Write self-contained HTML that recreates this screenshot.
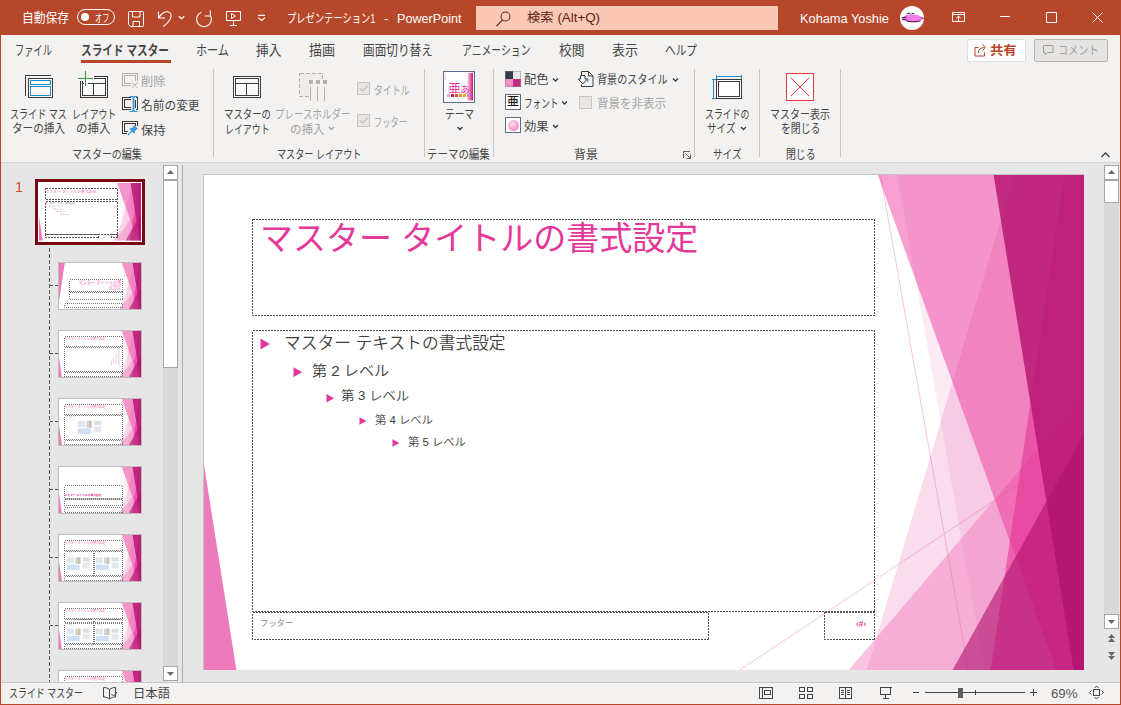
<!DOCTYPE html>
<html lang="ja"><head><meta charset="utf-8"><title>プレゼンテーション1 - PowerPoint</title>
<style>
*{box-sizing:border-box;margin:0;padding:0}
html,body{width:1121px;height:705px;overflow:hidden;background:#e6e6e6}
body{position:relative;font-family:"Liberation Sans","Noto Sans CJK JP",sans-serif;font-size:12px;color:#262626}
.abs,.t,svg{position:absolute}
svg{left:0;top:0;overflow:visible}
.t{white-space:pre;line-height:16px;height:16px;transform-origin:0 50%}
#titlebar{position:absolute;left:0;top:0;width:1121px;height:35px;background:#b7472a}
#tabs{position:absolute;left:0;top:35px;width:1121px;height:31px;background:#f3f2f1}
#ribbon{position:absolute;left:0;top:66px;width:1121px;height:97px;background:#f3f2f1;border-bottom:1px solid #d2d0ce}
#work{position:absolute;left:0;top:163px;width:1121px;height:519px;background:#e6e6e6}
#status{position:absolute;left:0;top:682px;width:1121px;height:23px;background:#f3f2f1;border-top:1px solid #c8c6c4}
#wborder{position:absolute;left:0;top:35px;width:1121px;height:670px;border:1px solid #b7472a;border-top:none;pointer-events:none}
.sep{position:absolute;top:69px;width:1px;height:88px;background:#c8c6c4}
</style></head><body>

<div id="titlebar"></div>
<div id="tabs"></div>
<div id="ribbon"></div>
<div class="abs" style="left:476px;top:6px;width:302px;height:24px;background:#fbc8b6"></div>
<div class="abs" style="left:77px;top:9px;width:38px;height:16px;border:1px solid #fff;border-radius:8px"></div>
<div class="abs" style="left:80.700px;top:12.600px;width:8.500px;height:8.500px;border-radius:4.250px;background:#fff"></div>
<div class="abs" style="left:80.5px;top:60px;width:90px;height:3px;background:#b7472a"></div>
<div class="abs" style="left:966.5px;top:38.500px;width:59px;height:23px;background:#fff;border:1px solid #e1dfdd;border-radius:2px"></div>
<div class="abs" style="left:1034px;top:38.500px;width:74px;height:23px;background:#e5e4e2;border:1px solid #b8b6b4;border-radius:2px"></div>
<div class="abs" style="left:899.5px;top:6px;width:24px;height:24px;border-radius:12px;background:#fff"></div>
<!-- titlebar icons -->
<svg width="1121" height="36" fill="none" stroke="#fff" stroke-width="1">
<path d="M128.500 12.500a1 1 0 0 1 1-1h13a1 1 0 0 1 1 1v13a1 1 0 0 1-1 1h-12l-2-2zM132.500 11.500v5.500h7.500v-5.500M133 26.500v-5h6.500v5"/>
<path d="M158.500 11.500v6.500h6.500M158.800 17.700C161 13.500 165 11.200 168 11.800C171.500 12.500 172 16.500 170 19.500C168.500 22 166 24.500 163.500 26.500" stroke-width="1.1"/>
<path d="M178.800 16.200l2.700 2.500l2.700-2.500" stroke-width="1.300"/>
<path d="M204.500 16h5.800v-5.800M210.700 16.100A7.400 7.400 0 1 1 201.400 12.300" stroke-width="1.100"/>
<path d="M226.500 11.500h14v9h-14zM233.500 20.500v4.500M230 25.500h7M231.500 13.500v5l4-2.500z"/>
<path d="M258.200 15.300h6.800M258.200 17.600l3.400 2.800l3.400-2.800" stroke-width="1.200"/>
<path d="M952.500 12.500h12v9h-12zM952.500 14.500h12M958.500 21.500v-5M956.300 18.200l2.200-2.200l2.200 2.200"/>
<path d="M1000 16.500h10M1046.500 12.500h10v10h-10zM1092.500 12.500l10 10M1102.500 12.500l-10 10"/>
<g stroke="#6b2a18" stroke-width="1.1"><circle cx="505.500" cy="16.500" r="4.500"/><path d="M502.500 20l-6 6"/></g>
</svg>
<!-- avatar scribble -->
<svg width="1121" height="36"><path d="M902.500 18.500c1-2.500 4-4 8-4.200c4-.2 8 .6 10.500 2.200l2.700 2.200l-2.700 1.800c-3 1.300-8 1.700-12 1.200c-3-.4-5.500-1.500-6.500-3.200z" fill="#f47de9"/><path d="M901.500 17.800l5 -.6M902 19.500l4.500 .3M906.500 21l5 .8l4.500 -.1l4.500-.8M906.500 14.200l2.500-1.200l1.500 .8M911.500 13.300l2.500 .2M921.500 17.500l2.200 1" stroke="#1a0a1a" stroke-width=".9" fill="none"/></svg>
<!-- share / comment icons -->
<svg width="1121" height="70" fill="none" stroke-width="1">
<path d="M978.500 47.500h-3.500v8.500h9.500v-3.500M978 53c.5-3.500 3-5.500 6.500-5.500M982.500 44.500l3 3l-3 3" stroke="#b7472a"/>
<path d="M1043.500 45.500h9.500v7h-5.500l-2.500 2.500v-2.500h-1.500z" stroke="#a19f9d"/>
</svg>
<!-- separators -->
<div class="sep" style="left:213px"></div><div class="sep" style="left:424px"></div><div class="sep" style="left:493px"></div>
<div class="sep" style="left:694px"></div><div class="sep" style="left:759px"></div><div class="sep" style="left:840px"></div>
<!-- ribbon icons -->
<svg width="1121" height="165" fill="none" stroke-width="1" shape-rendering="crispEdges">
<!-- insert slide master -->
<path d="M25.500 95.500v-20h25.500" stroke="#3b3a39"/>
<rect x="28.500" y="78.500" width="24" height="19" fill="#fafafa" stroke="#3b3a39"/>
<rect x="30.500" y="80.500" width="20" height="4" stroke="#1e8bcd"/>
<rect x="30.500" y="86.500" width="20" height="9" stroke="#1e8bcd"/>
<!-- insert layout -->
<rect x="82" y="78" width="24" height="18" fill="#fafafa" stroke="none"/>
<path d="M93.500 76.500H107.500V97.500H80.500V81M94 78.500H105.500V95.500H82.500V81M82.500 83.500H84M87.500 83.500H105.500M93.500 83.500V95.500" stroke="#3b3a39"/>
<path d="M85.500 71V86M78 78.500H93" stroke="#2f9a41" stroke-width="1.300"/>
<!-- delete (disabled) -->
<g stroke="#b3b0ad"><path d="M137.500 81V73.500H122.500V85.500H131M135.500 81V75.500H124.500V83.500H131"/><path d="M132 82.500l5.500 5.500M137.500 82.500l-5.500 5.500" shape-rendering="auto"/></g>
<!-- rename -->
<path d="M131 97.500H122.500V109.500H131M131 99.500H124.500V107.500H131M136 97.500H137.500V109.500H136M135.500 99.500V107.500" stroke="#3b3a39"/>
<path d="M133.500 97v14" stroke="#2b90d9" stroke-width="1.700" shape-rendering="auto"/><path d="M129.500 96.500h3l1 1l1-1h3M129.500 111.500h3l1-1l1 1h3" stroke="#2b90d9" stroke-width="1.200" shape-rendering="auto"/>
<!-- preserve -->
<path d="M137.500 126V121.500H122.500V133.500H127M135.500 126V123.500H124.500V131.500H128" stroke="#3b3a39"/>
<g shape-rendering="auto"><path d="M134 125.500l3.500 3.500l-1.200 .3l-1.800 1.800l-.2 2.200l-4.600-4.600l2.200-.2l1.800-1.800z" fill="#3a96dd" stroke="#1e8bcd" stroke-width=".6"/><path d="M131.800 131.200l-4 4" stroke="#1e8bcd" stroke-width="1.200"/></g>
<!-- master layout -->
<rect x="233.500" y="76.500" width="27" height="21" fill="#fafafa" stroke="#3b3a39"/>
<rect x="235.500" y="78.500" width="23" height="17" stroke="#3b3a39"/>
<path d="M235.500 83.500h23M246.500 83.500v12" stroke="#3b3a39"/>
<!-- insert placeholder (disabled) -->
<rect x="299.500" y="73.500" width="23" height="23" fill="#edecea" stroke="#b3b0ad" stroke-dasharray="4 2"/>
<rect x="308.500" y="78.500" width="20" height="24" fill="#f3f2f1" stroke="none"/>
<path d="M309 79.500h4v4h-4zM316 79.500h4v4h-4zM323 79.500h4v4h-4z" fill="#b3b0ad" stroke="none"/>
<path d="M310.500 87v14M317.500 87v14M324.500 87v14" stroke="#b3b0ad"/>
<!-- checkboxes -->
<rect x="357.500" y="82.500" width="12" height="12" fill="#e8e6e4" stroke="#c8c6c4"/>
<rect x="357.500" y="114.500" width="12" height="12" fill="#e8e6e4" stroke="#c8c6c4"/>
<path d="M360 88.500l2.500 2.500l5-5M360 120.500l2.500 2.500l5-5" stroke="#a19f9d" shape-rendering="auto"/>
<!-- theme -->
<rect x="443.500" y="71.500" width="31" height="31" fill="#fff" stroke="#5d6b8a"/>
<!-- colors -->
<rect x="505" y="71" width="8" height="8" fill="#2f3b47" stroke="none"/><rect x="513" y="71" width="8" height="8" fill="#e9e8e7" stroke="none"/>
<rect x="505" y="79" width="8" height="8" fill="#f28fc8" stroke="none"/><rect x="513" y="79" width="8" height="8" fill="#c32a81" stroke="none"/>
<rect x="505.500" y="71.500" width="15" height="15" stroke="#8a8886" stroke-opacity=".5"/>
<!-- fonts -->
<rect x="505.500" y="94.500" width="15" height="15" fill="#fff" stroke="#5d6b8a"/>
<!-- effects -->
<rect x="505.500" y="117.500" width="15" height="15" fill="#fff" stroke="#5d6b8a"/>
<!-- background styles -->
<g shape-rendering="auto"><path d="M581.500 75v-3.500h7l4.500 4.500v10.500h-11.500v-2M588.500 71.500v4.500h4.500" stroke="#3b3a39"/>
<path d="M580.500 75.500h4.500v3.500h2.300l-4.500 5l-4.500-5h2.200z" fill="#f3f2f1" stroke="#3b3a39"/><path d="M586 78.500l2.300 .5l-.5 3z" fill="#3a96dd" stroke="#3a96dd" stroke-width=".6"/></g>
<!-- hide bg checkbox -->
<rect x="579.500" y="96.500" width="12" height="12" fill="#e8e6e4" stroke="#c8c6c4"/>
<!-- dialog launcher -->
<path d="M683.500 157.500v-6h6" stroke="#605e5c"/><path d="M685.500 153.500l5 5M690.500 154.500v4h-4" stroke="#605e5c" shape-rendering="auto"/>
<!-- slide size -->
<rect x="716.500" y="79.500" width="25" height="19" fill="#fff" stroke="#3b3a39"/>
<rect x="718.500" y="81.500" width="21" height="15" stroke="#3b3a39"/>
<path d="M716.500 76.500h25M716.500 74.500v4M741.500 74.500v4M713.500 79.500v19M711.500 79.500h4M711.500 98.500h4" stroke="#1e8bcd"/>
<!-- close master -->
<rect x="786.500" y="73.500" width="27" height="27" fill="#fff" stroke="#e8373d"/>
<path d="M791 78l18 18M809 78l-18 18" stroke="#e8373d" shape-rendering="auto"/>
<!-- chevrons -->
<g stroke="#3b3b3b" stroke-width="1.300" shape-rendering="auto">
<path d="M553 78.500l2.500 2.500l2.500-2.500M562 101.500l2.500 2.500l2.500-2.500M553 125l2.500 2.500l2.500-2.500M673 78.500l2.500 2.500l2.500-2.500"/>
<path d="M457.500 127l2.500 2.500l2.500-2.500M741 127l2.500 2.500l2.500-2.500"/>
<path d="M329 127l2.500 2.500l2.500-2.500" stroke="#a19f9d"/>
<path d="M1101.500 157l4-4l4 4"/>
</g>
</svg>
<!-- theme icon content -->
<svg width="1121" height="165"><defs><linearGradient id="tg" x1="0" x2="1"><stop offset="0" stop-color="#fbd3e8"/><stop offset=".6" stop-color="#ec62ae"/><stop offset="1" stop-color="#c2187b"/></linearGradient></defs>
<path d="M468 73h5v27.500h-6z" fill="url(#tg)"/><path d="M445.300 73v7" stroke="#f7b8da" stroke-width=".8"/>
<path d="M447 94h3v3h-3z" fill="#f5a3d3"/><path d="M451 94h3v3h-3z" fill="#b5246e"/><path d="M455 94h3v3h-3z" fill="#d9531e"/><path d="M459 94h3v3h-3z" fill="#ee8a1f"/><path d="M463 94h3v3h-3z" fill="#f2a614"/><path d="M467 94h3v3h-3z" fill="#b98ae8"/></svg>
<div class="t" style="left:448.300px;top:80.500px;font-size:12.500px;color:#e5399a;letter-spacing:-.500px">亜<span style="font-size:9.500px">あ</span></div>
<div class="t" style="left:507px;top:94.300px;font-size:12px;color:#1b1a19;font-weight:500">亜</div>
<div class="abs" style="left:507.500px;top:119.500px;width:11px;height:11px;border-radius:6px;background:radial-gradient(circle at 40% 35%,#fde0ef,#f28fc8 70%,#ee7ebf)"></div>

<div class="abs" style="left:163px;top:165px;width:15px;height:516px;background:#d9d9d9"></div>
<div class="abs" style="left:163px;top:165px;width:15px;height:15px;background:#fff;border:1px solid #a6a6a6"></div>
<div class="abs" style="left:163px;top:180px;width:15px;height:188px;background:#fff;border:1px solid #a6a6a6"></div>
<div class="abs" style="left:163px;top:666px;width:15px;height:15px;background:#fff;border:1px solid #a6a6a6"></div>
<div class="abs" style="left:182px;top:165px;width:1px;height:517px;background:#adadad"></div>
<div class="abs" style="left:1104px;top:165px;width:15px;height:517px;background:#d9d9d9"></div>
<div class="abs" style="left:1104px;top:165px;width:15px;height:15px;background:#fff;border:1px solid #a6a6a6"></div>
<div class="abs" style="left:1104px;top:180px;width:15px;height:23px;background:#fff;border:1px solid #a6a6a6"></div>
<div class="abs" style="left:1104px;top:614px;width:15px;height:15px;background:#fff;border:1px solid #a6a6a6"></div>
<div class="abs" style="left:1104px;top:629px;width:15px;height:53px;background:#e6e6e6"></div>
<svg width="1121" height="705" fill="#686868"><path d="M167 174l3.500-4l3.500 4zM167 672l3.500 4l3.500-4zM1108 174l3.500-4l3.500 4zM1108 620l3.500 4l3.500-4z"/>
<path d="M1108 638l3.500-4l3.500 4zM1108 642l3.500-4l3.500 4zM1108 652l3.500 4l3.500-4zM1108 656l3.500 4l3.500-4z" fill="#666"/></svg>
<svg width="0" height="0"><defs>
<g id="fR"><line x1="676.4" y1="0" x2="764.4" y2="495" stroke="#f9c6e1" stroke-width="4"/>
<line x1="880" y1="265.7" x2="535.9" y2="495" stroke="#f9c6e1" stroke-width="4"/>
<polygon points="810.3,0 880,0 880,495 662.7,495" fill="#e32d91" fill-opacity=".16"/>
<polygon points="693.2,0 880,0 880,495 780.5,495" fill="#e32d91" fill-opacity=".10"/>
<polygon points="644.7,495 880,220 880,495" fill="#ef69b3" fill-opacity=".40"/>
<polygon points="673.8,0 880,0 880,495 852.2,495" fill="#e92c96" fill-opacity=".45"/>
<polygon points="860.3,0 880,0 880,495 786.7,495" fill="#e32d91" fill-opacity=".55"/>
<polygon points="789.6,0 880,0 880,495 869.6,495" fill="#b71773" fill-opacity=".85"/>
<polygon points="748.6,495 880,259.1 880,495" fill="#b0116e" fill-opacity=".60"/></g>
<polygon id="fL" points="0,289.7 0,495 32.4,495" fill="#e32d91" fill-opacity=".63"/>
<polygon id="fT" points="0,0 62,0 0,410" fill="#e32d91" fill-opacity=".63"/>
<g id="ico"><rect x="0" y="0" width="60" height="50" fill="#dfe6ee"/><rect x="70" y="0" width="50" height="55" fill="#c9d9ea"/><rect x="95" y="0" width="14" height="55" fill="#e9b27c"/><rect x="135" y="0" width="60" height="35" fill="#d5e4dc"/><rect x="0" y="62" width="110" height="45" fill="#cfe0f2"/><rect x="135" y="45" width="60" height="50" fill="#e4e8ee"/></g>
</defs></svg>
<div class="abs" style="left:35px;top:179px;width:110px;height:66px;border:3px solid #7a0a12;background:#fff"></div>
<svg style="left:39px;top:183px;overflow:hidden" width="102" height="58"><g transform="scale(0.11591)"><rect width="880" height="495" fill="#fff"/><use href="#fR"/><use href="#fL"/><text x="57" y="84" font-size="33" fill="#ee6db5" text-anchor="start" font-weight="400">マスター タイトルの書式設定</text><g fill="#9a9a9a"><text x="82" y="177" font-size="17" fill="#8a8a8a" text-anchor="start" font-weight="400">マスター テキストの書式設定</text><text x="110" y="204" font-size="15" fill="#8a8a8a" text-anchor="start" font-weight="400">第 2 レベル</text><text x="139" y="229" font-size="13" fill="#8a8a8a" text-anchor="start" font-weight="400">第 3 レベル</text><text x="172" y="252" font-size="11" fill="#8a8a8a" text-anchor="start" font-weight="400">第 4 レベル</text><text x="205" y="274" font-size="11" fill="#8a8a8a" text-anchor="start" font-weight="400">第 5 レベル</text></g><g fill="#ee6db5"><rect x="56" y="164" width="12" height="12"/><rect x="89" y="192" width="10" height="10"/><rect x="122" y="219" width="9" height="9"/><rect x="155" y="243" width="8" height="8"/><rect x="188" y="265" width="8" height="8"/></g></g><g fill="none" stroke="#5a5a5a" stroke-width="1" stroke-dasharray="2 1" shape-rendering="crispEdges"><rect x="6.5" y="5.5" width="72.0" height="11.0"/><rect x="6.5" y="18.5" width="72.0" height="33.0"/><rect x="6.5" y="51.5" width="53.0" height="3.0"/><rect x="72.5" y="51.5" width="6.0" height="3.0"/></g></svg>
<svg style="left:59px;top:263px;overflow:hidden;outline:1px solid #bdbdbd" width="82" height="46"><g transform="scale(0.09318)"><rect width="880" height="495" fill="#fff"/><use href="#fR"/><use href="#fT"/><text x="670" y="226" font-size="45" fill="#ee6db5" text-anchor="end" font-weight="400">マスター タイトルの書</text><text x="670" y="280" font-size="45" fill="#ee6db5" text-anchor="end" font-weight="400">式設定</text></g><g fill="none" stroke="#777" stroke-width="1" stroke-dasharray="1 1" shape-rendering="crispEdges"><rect x="10.5" y="16.5" width="53.0" height="12.0"/><rect x="10.5" y="29.5" width="53.0" height="7.0"/><rect x="5.5" y="40.5" width="58.0" height="4.0"/></g></svg>
<svg style="left:59px;top:331px;overflow:hidden;outline:1px solid #bdbdbd" width="82" height="46"><g transform="scale(0.09318)"><rect width="880" height="495" fill="#fff"/><use href="#fR"/><use href="#fL"/><text x="60" y="92" font-size="33" fill="#ee6db5" text-anchor="start" font-weight="400">マスター タイトルの書式設定</text><g fill="#c9a0c0"><rect x="640" y="180" width="6" height="190"/><rect x="610" y="240" width="5" height="120"/><rect x="585" y="280" width="5" height="80"/><rect x="560" y="320" width="5" height="50"/></g></g><g fill="none" stroke="#777" stroke-width="1" stroke-dasharray="1 1" shape-rendering="crispEdges"><rect x="5.5" y="5.5" width="58.0" height="10.0"/><rect x="5.5" y="16.5" width="58.0" height="24.0"/><rect x="5.5" y="41.5" width="58.0" height="4.0"/></g></svg>
<svg style="left:59px;top:399px;overflow:hidden;outline:1px solid #bdbdbd" width="82" height="46"><g transform="scale(0.09318)"><rect width="880" height="495" fill="#fff"/><use href="#fR"/><use href="#fL"/><text x="60" y="92" font-size="33" fill="#ee6db5" text-anchor="start" font-weight="400">マスター タイトルの書式設定</text><g transform="translate(90,185) scale(0.55)"><text x="26" y="14" font-size="17" fill="#8a8a8a" text-anchor="start" font-weight="400">マスター テキスト</text><text x="54" y="40" font-size="15" fill="#8a8a8a" text-anchor="start" font-weight="400">第 2 レベル</text><text x="82" y="64" font-size="13" fill="#8a8a8a" text-anchor="start" font-weight="400">第 3 レベル</text><rect x="0" y="2" width="12" height="12" fill="#ee6db5"/><rect x="30" y="30" width="10" height="10" fill="#ee6db5"/></g><g transform="translate(200,235) scale(1.3)"><use href="#ico"/></g></g><g fill="none" stroke="#777" stroke-width="1" stroke-dasharray="1 1" shape-rendering="crispEdges"><rect x="5.5" y="5.5" width="58.0" height="10.0"/><rect x="5.5" y="16.5" width="58.0" height="24.0"/><rect x="5.5" y="41.5" width="58.0" height="4.0"/></g></svg>
<svg style="left:59px;top:467px;overflow:hidden;outline:1px solid #bdbdbd" width="82" height="46"><g transform="scale(0.09318)"><rect width="880" height="495" fill="#fff"/><use href="#fR"/><use href="#fL"/><text x="60" y="312" font-size="30" fill="#e5399a" text-anchor="start" font-weight="700">マスター タイトルの書式設定</text><rect x="60" y="340" width="610" height="8" fill="#777"/></g><g fill="none" stroke="#777" stroke-width="1" stroke-dasharray="1 1" shape-rendering="crispEdges"><rect x="5.5" y="18.5" width="58.0" height="13.0"/><rect x="5.5" y="32.5" width="58.0" height="6.0"/><rect x="5.5" y="40.5" width="58.0" height="5.0"/></g></svg>
<svg style="left:59px;top:535px;overflow:hidden;outline:1px solid #bdbdbd" width="82" height="46"><g transform="scale(0.09318)"><rect width="880" height="495" fill="#fff"/><use href="#fR"/><use href="#fL"/><text x="60" y="92" font-size="33" fill="#ee6db5" text-anchor="start" font-weight="400">マスター タイトルの書式設定</text><g transform="translate(80,175) scale(0.55)"><text x="26" y="14" font-size="17" fill="#8a8a8a" text-anchor="start" font-weight="400">マスター テキスト</text><text x="54" y="40" font-size="15" fill="#8a8a8a" text-anchor="start" font-weight="400">第 2 レベル</text><text x="82" y="64" font-size="13" fill="#8a8a8a" text-anchor="start" font-weight="400">第 3 レベル</text><rect x="0" y="2" width="12" height="12" fill="#ee6db5"/><rect x="30" y="30" width="10" height="10" fill="#ee6db5"/></g><g transform="translate(390,175) scale(0.55)"><text x="26" y="14" font-size="17" fill="#8a8a8a" text-anchor="start" font-weight="400">マスター テキスト</text><text x="54" y="40" font-size="15" fill="#8a8a8a" text-anchor="start" font-weight="400">第 2 レベル</text><text x="82" y="64" font-size="13" fill="#8a8a8a" text-anchor="start" font-weight="400">第 3 レベル</text><rect x="0" y="2" width="12" height="12" fill="#ee6db5"/><rect x="30" y="30" width="10" height="10" fill="#ee6db5"/></g><g transform="translate(85,240) scale(1.25)"><use href="#ico"/></g><g transform="translate(395,240) scale(1.25)"><use href="#ico"/></g></g><g fill="none" stroke="#777" stroke-width="1" stroke-dasharray="1 1" shape-rendering="crispEdges"><rect x="5.5" y="5.5" width="58.0" height="10.0"/><rect x="5.5" y="16.5" width="29.0" height="24.0"/><rect x="35.5" y="16.5" width="28.0" height="24.0"/><rect x="5.5" y="41.5" width="58.0" height="4.0"/></g></svg>
<svg style="left:59px;top:603px;overflow:hidden;outline:1px solid #bdbdbd" width="82" height="46"><g transform="scale(0.09318)"><rect width="880" height="495" fill="#fff"/><use href="#fR"/><use href="#fL"/><text x="60" y="92" font-size="33" fill="#ee6db5" text-anchor="start" font-weight="400">マスター タイトルの書式設定</text><rect x="150" y="172" width="200" height="8" fill="#888"/><rect x="460" y="172" width="200" height="8" fill="#888"/><g transform="translate(80,215) scale(0.55)"><text x="26" y="14" font-size="17" fill="#8a8a8a" text-anchor="start" font-weight="400">マスター テキスト</text><text x="54" y="40" font-size="15" fill="#8a8a8a" text-anchor="start" font-weight="400">第 2 レベル</text><text x="82" y="64" font-size="13" fill="#8a8a8a" text-anchor="start" font-weight="400">第 3 レベル</text><rect x="0" y="2" width="12" height="12" fill="#ee6db5"/><rect x="30" y="30" width="10" height="10" fill="#ee6db5"/></g><g transform="translate(390,215) scale(0.55)"><text x="26" y="14" font-size="17" fill="#8a8a8a" text-anchor="start" font-weight="400">マスター テキスト</text><text x="54" y="40" font-size="15" fill="#8a8a8a" text-anchor="start" font-weight="400">第 2 レベル</text><text x="82" y="64" font-size="13" fill="#8a8a8a" text-anchor="start" font-weight="400">第 3 レベル</text><rect x="0" y="2" width="12" height="12" fill="#ee6db5"/><rect x="30" y="30" width="10" height="10" fill="#ee6db5"/></g><g transform="translate(85,275) scale(1.25)"><use href="#ico"/></g><g transform="translate(395,275) scale(1.25)"><use href="#ico"/></g></g><g fill="none" stroke="#777" stroke-width="1" stroke-dasharray="1 1" shape-rendering="crispEdges"><rect x="5.5" y="5.5" width="58.0" height="10.0"/><rect x="5.5" y="16.5" width="29.0" height="3.0"/><rect x="35.5" y="16.5" width="28.0" height="3.0"/><rect x="5.5" y="20.5" width="29.0" height="20.0"/><rect x="35.5" y="20.5" width="28.0" height="20.0"/><rect x="5.5" y="41.5" width="58.0" height="4.0"/></g></svg>
<svg style="left:59px;top:671px;overflow:hidden;outline:1px solid #bdbdbd" width="82" height="46"><g transform="scale(0.09318)"><rect width="880" height="495" fill="#fff"/><use href="#fR"/><use href="#fL"/><text x="60" y="92" font-size="33" fill="#ee6db5" text-anchor="start" font-weight="400">マスター タイトルの書式設定</text></g><g fill="none" stroke="#777" stroke-width="1" stroke-dasharray="1 1" shape-rendering="crispEdges"><rect x="5.5" y="5.5" width="58.0" height="10.0"/></g></svg>
<svg width="200" height="705" fill="none" stroke="#555" stroke-width="1" shape-rendering="crispEdges"><path d="M49.500 248v434" stroke-dasharray="4 2"/><path d="M50 285.5h8" stroke-dasharray="3 2"/><path d="M50 353.5h8" stroke-dasharray="3 2"/><path d="M50 421.5h8" stroke-dasharray="3 2"/><path d="M50 489.5h8" stroke-dasharray="3 2"/><path d="M50 557.5h8" stroke-dasharray="3 2"/><path d="M50 625.5h8" stroke-dasharray="3 2"/></svg>

<div class="abs" style="left:203px;top:174px;width:881px;height:496px;background:#c6c4c2"></div>
<div id="slide" class="abs" style="left:204px;top:175px;width:880px;height:495px;background:#fff;overflow:hidden">
<svg width="880" height="495" viewBox="0 0 880 495">
<line x1="676.4" y1="0" x2="764.4" y2="495" stroke="#f9c6e1" stroke-width="1"/>
<line x1="880" y1="265.7" x2="535.9" y2="495" stroke="#f9c6e1" stroke-width="1"/>
<polygon points="810.3,0 880,0 880,495 662.7,495" fill="#e32d91" fill-opacity=".16"/>
<polygon points="693.2,0 880,0 880,495 780.5,495" fill="#e32d91" fill-opacity=".10"/>
<polygon points="644.7,495 880,220 880,495" fill="#ef69b3" fill-opacity=".40"/>
<polygon points="673.8,0 880,0 880,495 852.2,495" fill="#e92c96" fill-opacity=".45"/>
<polygon points="860.3,0 880,0 880,495 786.7,495" fill="#e32d91" fill-opacity=".55"/>
<polygon points="789.6,0 880,0 880,495 869.6,495" fill="#b71773" fill-opacity=".85"/>
<polygon points="748.6,495 880,259.1 880,495" fill="#b0116e" fill-opacity=".60"/>
<polygon points="0,289.7 0,495 32.4,495" fill="#e32d91" fill-opacity=".63"/>
</svg>
<div class="abs" style="left:0;top:-1px;width:880px;height:496px">
<svg width="880" height="496" shape-rendering="crispEdges" fill="none" stroke="#555" stroke-width="1" stroke-dasharray="2 1">
<rect x="48.5" y="45.5" width="622" height="95.5"/>
<rect x="48.5" y="156.5" width="622" height="281"/>
<rect x="48.5" y="438.5" width="456" height="27"/>
<rect x="620.5" y="438.5" width="50" height="27"/>
</svg>
<div class="t" style="left:56px;top:43px;font-size:33px;line-height:44px;height:44px;color:#e5399a">マスター タイトルの書式設定</div>
<div class="t" style="left:79.600px;top:157.200px;font-size:16.6px;line-height:26px;height:26px;color:#404040;font-weight:350;transform:scaleX(1.008)">マスター テキストの書式設定</div>
<div class="t" style="left:108px;top:185.200px;font-size:14.7px;line-height:24px;height:24px;color:#404040;font-weight:350;transform:scaleX(1.027)">第 2 レベル</div>
<div class="t" style="left:137px;top:211.400px;font-size:12.900px;line-height:22px;height:22px;color:#404040;font-weight:350;transform:scaleX(1.035)">第 3 レベル</div>
<div class="t" style="left:170.500px;top:236px;font-size:11px;line-height:20px;height:20px;color:#404040;font-weight:350;transform:scaleX(1.03)">第 4 レベル</div>
<div class="t" style="left:203.500px;top:258px;font-size:11px;line-height:20px;height:20px;color:#404040;font-weight:350;transform:scaleX(1.03)">第 5 レベル</div>
<svg width="880" height="496" fill="#e5399a">
<polygon points="56.5,164.5 66,170 56.5,175.5"/>
<polygon points="89.5,193.300 98.300,198.200 89.5,203.100"/>
<polygon points="122.5,220 130.200,224.200 122.5,228.400"/>
<polygon points="155.5,243.200 162.300,247 155.5,250.800"/>
<polygon points="188.5,265.200 195.300,269 188.5,272.800"/>
</svg>
<div class="t" style="left:56px;top:441px;font-size:8.3px;color:#8c8c8c">フッター</div>
<div class="t" style="left:652px;top:442px;font-size:8.3px;color:#e5399a;font-weight:bold">‹#›</div>
</div>
</div>

<div id="status"></div>
<svg width="1121" height="705" fill="none" stroke="#444" stroke-width="1">
<path d="M103.500 687.500c2.500 0 4 .5 6 2c2-1.500 3.500-2 6-2v9.500c-2.500 0-4 .5-6 2c-2-1.500-3.500-2-6-2zM109.500 689.500v9M111.500 694l2 2l3.500-4"/>
<g shape-rendering="crispEdges">
<path d="M759.500 687.500h13v11h-13zM762.500 687.500v11M764.500 690.500h6v4h-6z"/>
<path d="M799.500 687.500h4.500v4h-4.500zM807.500 687.500h4.500v4h-4.500zM799.500 694.500h4.500v4h-4.500zM807.500 694.500h4.500v4h-4.500z"/>
<path d="M839.500 687.500h5.500v11h-5.500zM845.500 687.500h5.500v11h-5.500zM841 690.500h3M841 692.500h3M841 694.500h3M847 690.500h3M847 692.500h3M847 694.500h3"/>
<path d="M879.500 687.500h12M880.500 687.500v7h10v-7M885.500 694.500v4M882.500 698.500h6"/>
<path d="M913 692.500h6M925 692.500h100M1030 692.500h7M1033.500 689v7M975.500 690v5"/>
<rect x="957.500" y="688" width="5" height="10" fill="#605e5c" stroke="none"/>
<rect x="1093.500" y="689.500" width="6" height="6"/>
</g>
<path d="M1094.500 688l2-2l2 2M1094.500 697l2 2l2-2M1091.500 690.500l-2 2l2 2M1101.500 690.500l2 2l-2 2"/>
</svg>

<div class="t" style="left:22.3px;top:10.0px;font-size:13px;color:#fff;transform:scaleX(0.905);">自動保存</div>
<div class="t" style="left:95.1px;top:11.3px;font-size:10px;color:#fff;transform:scaleX(0.720);">オフ</div>
<div class="t" style="left:286.5px;top:10.8px;font-size:12.5px;color:#fff;transform:scaleX(0.742);">プレゼンテーション1</div>
<div class="t" style="left:384.0px;top:10.8px;font-size:12.5px;color:#fff;transform:scaleX(1.079);">-</div>
<div class="t" style="left:396.5px;top:10.8px;font-size:12.5px;color:#fff;transform:scaleX(1.009);">PowerPoint</div>
<div class="t" style="left:526.5px;top:10.3px;font-size:12.5px;color:#5c2314;transform:scaleX(1.067);">検索 (Alt+Q)</div>
<div class="t" style="left:800.2px;top:10.8px;font-size:12.5px;color:#fff;transform:scaleX(1.023);">Kohama Yoshie</div>
<div class="t" style="left:14.5px;top:43.4px;font-size:13.2px;color:#444;transform:scaleX(0.701);">ファイル</div>
<div class="t" style="left:80.5px;top:43.4px;font-size:13.2px;color:#444;font-weight:700;transform:scaleX(0.806);">スライド マスター</div>
<div class="t" style="left:195.5px;top:43.4px;font-size:13.2px;color:#444;transform:scaleX(0.842);">ホーム</div>
<div class="t" style="left:256.2px;top:43.4px;font-size:13.2px;color:#444;transform:scaleX(0.959);">挿入</div>
<div class="t" style="left:309.0px;top:43.4px;font-size:13.2px;color:#444;transform:scaleX(0.986);">描画</div>
<div class="t" style="left:363.2px;top:43.4px;font-size:13.2px;color:#444;transform:scaleX(0.882);">画面切り替え</div>
<div class="t" style="left:462.0px;top:43.4px;font-size:13.2px;color:#444;transform:scaleX(0.746);">アニメーション</div>
<div class="t" style="left:559.0px;top:43.4px;font-size:13.2px;color:#444;transform:scaleX(0.967);">校閲</div>
<div class="t" style="left:612.0px;top:43.4px;font-size:13.2px;color:#444;transform:scaleX(0.986);">表示</div>
<div class="t" style="left:664.5px;top:43.4px;font-size:13.2px;color:#444;transform:scaleX(0.809);">ヘルプ</div>
<div class="t" style="left:989.5px;top:43.1px;font-size:12.5px;color:#b7472a;font-weight:700;transform:scaleX(1.063);">共有</div>
<div class="t" style="left:1057.5px;top:43.1px;font-size:12.5px;color:#a6a4a2;transform:scaleX(0.812);">コメント</div>
<div class="t" style="left:10.3px;top:106.8px;font-size:12px;color:#444;transform:scaleX(0.755);">スライド マス</div>
<div class="t" style="left:12.2px;top:121.4px;font-size:12px;color:#444;transform:scaleX(0.883);">ターの挿入</div>
<div class="t" style="left:72.0px;top:106.8px;font-size:12px;color:#444;transform:scaleX(0.736);">レイアウト</div>
<div class="t" style="left:76.0px;top:121.4px;font-size:12px;color:#444;transform:scaleX(0.958);">の挿入</div>
<div class="t" style="left:140.5px;top:73.8px;font-size:12px;color:#a6a4a2;transform:scaleX(1.020);">削除</div>
<div class="t" style="left:140.5px;top:98.3px;font-size:12px;color:#444;transform:scaleX(0.976);">名前の変更</div>
<div class="t" style="left:140.5px;top:122.5px;font-size:12px;color:#444;transform:scaleX(1.020);">保持</div>
<div class="t" style="left:72.1px;top:146.6px;font-size:12px;color:#444;transform:scaleX(0.830);">マスターの編集</div>
<div class="t" style="left:223.5px;top:106.8px;font-size:12px;color:#444;transform:scaleX(0.783);">マスターの</div>
<div class="t" style="left:224.8px;top:121.5px;font-size:12px;color:#444;transform:scaleX(0.743);">レイアウト</div>
<div class="t" style="left:275.2px;top:106.8px;font-size:12px;color:#a6a4a2;transform:scaleX(0.792);">プレースホルダー</div>
<div class="t" style="left:289.5px;top:121.5px;font-size:12px;color:#a6a4a2;transform:scaleX(0.958);">の挿入</div>
<div class="t" style="left:374.4px;top:82.8px;font-size:12px;color:#a6a4a2;transform:scaleX(0.735);">タイトル</div>
<div class="t" style="left:374.4px;top:114.8px;font-size:12px;color:#a6a4a2;transform:scaleX(0.687);">フッター</div>
<div class="t" style="left:277.2px;top:146.6px;font-size:12px;color:#444;transform:scaleX(0.758);">マスター レイアウト</div>
<div class="t" style="left:444.5px;top:106.8px;font-size:12px;color:#444;transform:scaleX(0.805);">テーマ</div>
<div class="t" style="left:427.4px;top:146.6px;font-size:12px;color:#444;transform:scaleX(0.872);">テーマの編集</div>
<div class="t" style="left:523.5px;top:72.4px;font-size:12px;color:#444;transform:scaleX(1.024);">配色</div>
<div class="t" style="left:523.5px;top:95.6px;font-size:12px;color:#444;transform:scaleX(0.716);">フォント</div>
<div class="t" style="left:523.5px;top:118.9px;font-size:12px;color:#444;transform:scaleX(1.024);">効果</div>
<div class="t" style="left:597.1px;top:72.4px;font-size:12px;color:#444;transform:scaleX(0.842);">背景のスタイル</div>
<div class="t" style="left:597.1px;top:95.6px;font-size:12px;color:#a6a4a2;transform:scaleX(0.960);">背景を非表示</div>
<div class="t" style="left:574.2px;top:146.6px;font-size:12px;color:#444;transform:scaleX(0.995);">背景</div>
<div class="t" style="left:704.7px;top:106.8px;font-size:12px;color:#444;transform:scaleX(0.741);">スライドの</div>
<div class="t" style="left:707.0px;top:121.4px;font-size:12px;color:#444;transform:scaleX(0.800);">サイズ</div>
<div class="t" style="left:712.9px;top:146.6px;font-size:12px;color:#444;transform:scaleX(0.800);">サイズ</div>
<div class="t" style="left:769.8px;top:106.8px;font-size:12px;color:#444;transform:scaleX(0.832);">マスター表示</div>
<div class="t" style="left:780.5px;top:121.4px;font-size:12px;color:#444;transform:scaleX(0.821);">を閉じる</div>
<div class="t" style="left:785.5px;top:146.6px;font-size:12px;color:#444;transform:scaleX(0.819);">閉じる</div>
<div class="t" style="left:8.5px;top:685.8px;font-size:12px;color:#444;transform:scaleX(0.745);">スライド マスター</div>
<div class="t" style="left:132.5px;top:685.8px;font-size:12px;color:#444;transform:scaleX(1.027);">日本語</div>
<div class="t" style="left:1050.5px;top:685.8px;font-size:12px;color:#555;transform:scaleX(1.103);">69%</div>
<div class="t" style="left:14.5px;top:179.0px;font-size:14px;color:#d24726;transform:scaleX(1.026);">1</div>
<div id="wborder"></div>
</body></html>
